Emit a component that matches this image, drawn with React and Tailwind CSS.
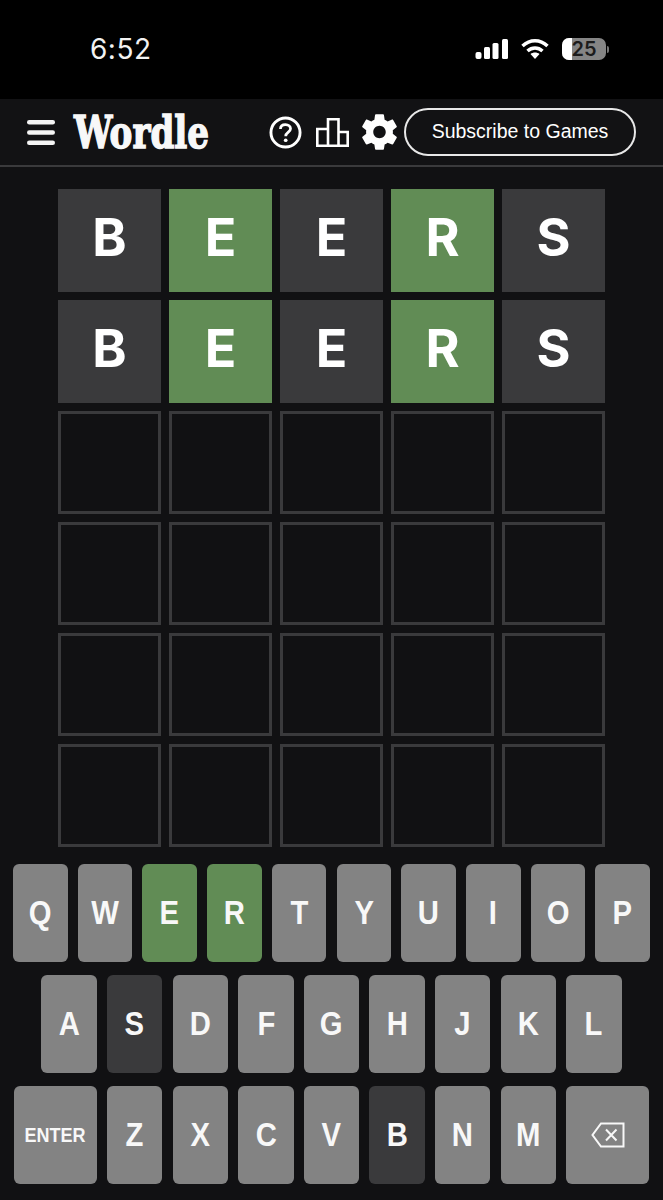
import React from 'react';

const ROWS = [
  ['B', 'E', 'E', 'R', 'S'],
  ['B', 'E', 'E', 'R', 'S'],
  ['', '', '', '', ''],
  ['', '', '', '', ''],
  ['', '', '', '', ''],
  ['', '', '', '', ''],
];

const GREEN = 'ER';
const ABSENT = 'BS';

const StatusBar = () => (
  <div className="h-[99px] bg-black flex items-start justify-between pl-[90px] pr-[54px] pt-[31px] text-white">
    <span className="font-['Inter',sans-serif] text-[28px] leading-[36px] tracking-[0.5px] opacity-95">6:52</span>
    <div className="flex items-center gap-[13px] pt-[7px]">
      <svg width="33" height="20" viewBox="0 0 33 20" fill="#fff">
        <rect x="0.500" y="13" width="6" height="7" rx="2" />
        <rect x="9" y="8" width="6" height="12" rx="1.500" />
        <rect x="17.500" y="4" width="6" height="16" rx="1.500" />
        <rect x="27" y="0" width="6" height="20" rx="1.500" />
      </svg>
      <svg width="28" height="20" viewBox="0 0 28 20" fill="none" stroke="#fff" strokeWidth="3.500">
        <path d="M1.500 7 C9 0 19 0 26.500 7" />
        <path d="M6.500 12 C11 8 17 8 21.500 12" />
        <path d="M14 20 L9.500 15 C12 13 16 13 18.500 15 Z" fill="#fff" stroke="none" />
      </svg>
      <div className="flex items-center gap-[1px]">
        <div className="relative w-[44px] h-[22px] rounded-[7px] overflow-hidden bg-[#858585] flex items-center justify-center">
          <div className="absolute left-0 top-0 bottom-0 w-[10px] bg-white" />
          <span className="relative font-['Inter',sans-serif] font-semibold text-[20px] leading-none text-[#1c1c1c]">25</span>
        </div>
        <div className="w-[2px] h-[7px] rounded-r bg-[#777]" />
      </div>
    </div>
  </div>
);

const Header = () => (
  <div className="h-[68px] bg-[#121214] border-b-2 border-[#3a3a3c] flex items-center pl-[27px] text-white">
    <svg width="28" height="25" viewBox="0 0 28 25" fill="#f4f4f4" className="shrink-0">
      <rect x="0" y="0" width="28" height="4.500" rx="2.250" />
      <rect x="0" y="10.250" width="28" height="4.500" rx="2.250" />
      <rect x="0" y="20.500" width="28" height="4.500" rx="2.250" />
    </svg>
    <div className="ml-[19px] w-[136px] shrink-0 whitespace-nowrap">
      <span className="inline-block origin-left scale-x-[0.76] font-['DejaVu_Serif',serif] font-bold text-[45px] leading-none text-[#f8f8f8] [-webkit-text-stroke:1.5px_#f8f8f8]">Wordle</span>
    </div>
    <svg width="33" height="33" viewBox="0 0 34 34" fill="none" className="ml-[59px] shrink-0">
      <circle cx="17" cy="17" r="15" stroke="#fff" strokeWidth="3" />
      <path d="M11.800 13.500 C11.800 10.500 14 8.800 17 8.800 C20 8.800 22.200 10.600 22.200 13.200 C22.200 16.500 17.200 16.800 17.200 20.800" stroke="#fff" strokeWidth="2.800" />
      <circle cx="17.200" cy="25" r="1.900" fill="#fff" />
    </svg>
    <svg width="33" height="29" viewBox="0 0 33 29" fill="none" stroke="#fff" strokeWidth="2.600" className="ml-[14px] shrink-0">
      <path d="M1.300 27.700 V11 H12 V27.700 Z M12 27.700 V1.300 H22.500 V27.700 Z M22.500 27.700 V14 H31.700 V27.700 Z" />
    </svg>
    <svg width="35" height="36" viewBox="2.200 2 19.600 20" fill="#fff" className="ml-[13px] shrink-0">
      <path d="M19.430 12.980c.04-.32.07-.64.07-.98s-.03-.66-.07-.98l2.110-1.650c.19-.15.240-.42.120-.64l-2-3.460c-.12-.22-.39-.3-.61-.22l-2.490 1c-.52-.4-1.080-.73-1.690-.98l-.38-2.650C14.460 2.180 14.250 2 14 2h-4c-.25 0-.46.18-.49.42l-.38 2.650c-.61.25-1.170.59-1.690.98l-2.490-1c-.23-.09-.49 0-.61.22l-2 3.460c-.13.22-.07.49.12.64l2.110 1.650c-.04.32-.07.65-.07.98s.03.66.07.98l-2.110 1.650c-.19.15-.24.42-.12.64l2 3.460c.12.22.39.3.61.22l2.490-1c.52.4 1.080.73 1.690.98l.38 2.650c.03.24.24.42.49.42h4c.25 0 .46-.18.49-.42l.38-2.650c.61-.25 1.170-.59 1.690-.98l2.490 1c.23.09.49 0 .61-.22l2-3.460c.12-.22.07-.49-.12-.64l-2.110-1.650zM12 15.500c-1.930 0-3.500-1.570-3.500-3.500s1.570-3.500 3.500-3.500 3.500 1.570 3.500 3.500-1.570 3.500-3.500 3.500z" />
    </svg>
    <div className="ml-[7px] shrink-0 w-[232px] h-[48px] rounded-full border-2 border-[#e8e8e8] flex items-center justify-center font-['Liberation_Sans',sans-serif] text-[19.500px] text-white">
      Subscribe to Games
    </div>
  </div>
);

const Tile = ({ letter, index }) => {
  if (!letter) return <div className="w-[103px] h-[102.500px] border-[3px] border-[#3a3a3c]" />;
  const color = index === 1 || index === 3 ? 'bg-[#618c55]' : 'bg-[#3a3a3c]';
  return (
    <div className={`w-[103px] h-[102.500px] pb-[5px] flex items-center justify-center font-['Inter',sans-serif] text-[52px] leading-none font-bold text-white ${color}`}>
      {letter}
    </div>
  );
};

const Board = () => (
  <div className="flex flex-col gap-[8.600px] items-center pt-[22px]">
    {ROWS.map((row, r) => (
      <div key={r} className="flex gap-[8px]">
        {row.map((letter, i) => <Tile key={i} letter={letter} index={i} />)}
      </div>
    ))}
  </div>
);

const Key = ({ label, width, children }) => {
  let color = 'bg-[#838383]';
  if (GREEN.includes(label)) color = 'bg-[#618c55]';
  if (ABSENT.includes(label)) color = 'bg-[#3a3a3c]';
  return (
    <div className={`h-[98px] rounded-[6px] flex items-center justify-center font-['Liberation_Sans',sans-serif] font-bold text-[#f8f8f8] ${width} ${color}`}>
      {children || (
        <span className={`inline-block ${label === 'ENTER' ? 'text-[20px] scale-x-90' : 'text-[34px] scale-x-[0.86]'}`}>{label}</span>
      )}
    </div>
  );
};

const Keyboard = () => (
  <div className="flex flex-col gap-[13px] pt-[17px]">
    <div className="flex justify-center gap-[10.100px]">
      {'QWERTYUIOP'.split('').map((k) => <Key key={k} label={k} width="w-[54.600px]" />)}
    </div>
    <div className="flex justify-center gap-[10.100px]">
      {'ASDFGHJKL'.split('').map((k) => <Key key={k} label={k} width="w-[55.500px]" />)}
    </div>
    <div className="flex justify-center gap-[10.300px]">
      <Key label="ENTER" width="w-[83px]" />
      {'ZXCVBNM'.split('').map((k) => <Key key={k} label={k} width="w-[55.300px]" />)}
      <Key label="DEL" width="w-[83px]">
        <svg width="34" height="26" viewBox="0 0 34 26" fill="none" stroke="#f8f8f8" strokeWidth="2">
          <path d="M10 1.500 H32.500 V24.500 H10 L1.500 13 Z" />
          <path d="M15 7.500 L25.500 18.500 M25.500 7.500 L15 18.500" />
        </svg>
      </Key>
    </div>
  </div>
);

const App = () => (
  <div className="w-[663px] h-[1200px] bg-[#111113] overflow-hidden">
    <StatusBar />
    <Header />
    <Board />
    <Keyboard />
  </div>
);

export default App;
